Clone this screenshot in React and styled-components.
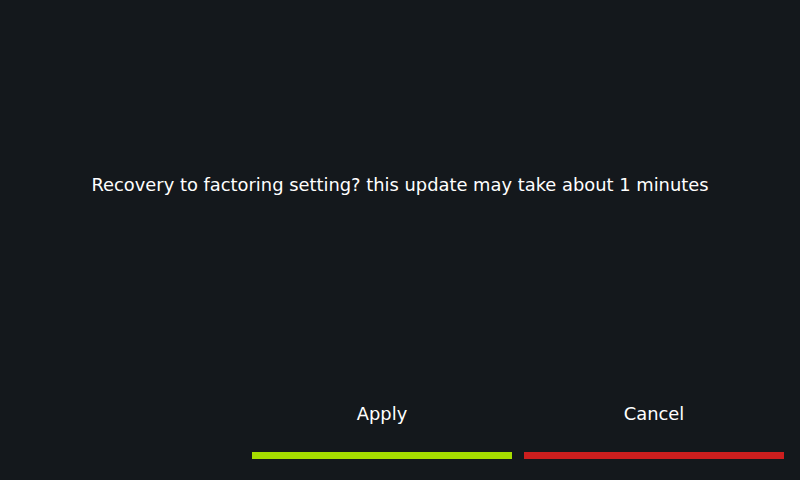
import React from "react";
import styled, { createGlobalStyle } from "styled-components";

const GlobalStyle = createGlobalStyle`
  html, body {
    margin: 0;
    padding: 0;
    background: #14181c;
  }
  body {
    font-family: "DejaVu Sans", "Liberation Sans", sans-serif;
  }
`;

const Screen = styled.div`
  width: 800px;
  height: 480px;
  background: #14181c;
  color: #ffffff;
  display: flex;
  flex-direction: column;
  box-sizing: border-box;
`;

const Message = styled.div`
  padding-top: 174px;
  height: 22px;
  font-size: 17.88px;
  line-height: 22px;
  text-align: center;
`;

const Actions = styled.div`
  margin-top: auto;
  display: flex;
  justify-content: flex-end;
  gap: 12px;
  padding: 0 16px 21px 0;
`;

const Button = styled.button`
  width: 260px;
  padding: 0;
  border: none;
  background: transparent;
  color: #ffffff;
  font-family: inherit;
  font-size: 17.88px;
  line-height: 22px;
  display: flex;
  flex-direction: column;
  align-items: center;
  gap: 27px;
  cursor: pointer;
`;

const Bar = styled.span`
  display: block;
  width: 100%;
  height: 7px;
  background: ${(props) => props.color};
`;

const App = () => {
  return (
    <>
      <GlobalStyle />
      <Screen>
        <Message>
          Recovery to factoring setting? this update may take about 1 minutes
        </Message>
        <Actions>
          <Button>
            Apply
            <Bar color="#a6dc00" />
          </Button>
          <Button>
            Cancel
            <Bar color="#cc1e1e" />
          </Button>
        </Actions>
      </Screen>
    </>
  );
};

export default App;
